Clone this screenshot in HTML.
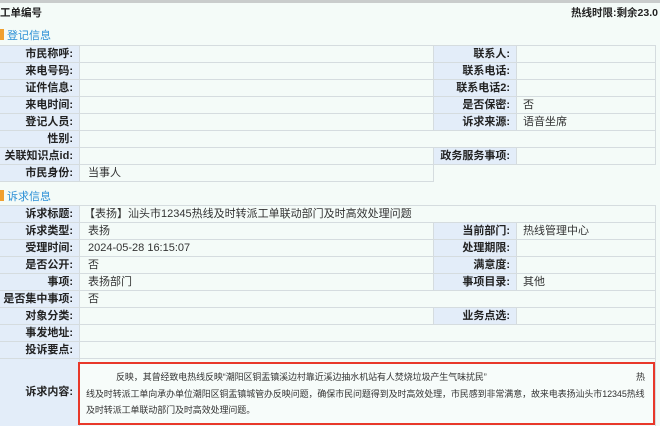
<!DOCTYPE html>
<html><head><meta charset="utf-8"><style>
*{margin:0;padding:0;box-sizing:border-box}
body{width:660px;height:426px;overflow:hidden;background:#f4fbf8;font-family:"Liberation Sans","Noto Sans CJK SC",sans-serif;font-size:11px;color:#333;position:relative}
.top{position:absolute;left:0;top:0;width:660px;height:3px;background:#c9cccc}
.abs{position:absolute;white-space:nowrap}
.b{font-weight:bold;color:#222}
.sec{position:absolute;left:0;color:#2a8fd6;font-size:11px}
.sec i{display:inline-block;width:4px;height:11px;background:#f0a030;margin-right:3px;vertical-align:-1px}
.row{position:absolute;left:0;width:656px;border-bottom:1px solid #d5dcdf}
.lab{position:absolute;left:0;width:80px;height:100%;background:#e3edf9;text-align:right;padding-right:6px;font-weight:bold;color:#222;border-right:1px solid #d5dcdf}
.lab2{position:absolute;left:433px;width:84px;height:100%;background:#e3edf9;text-align:right;padding-right:6px;font-weight:bold;color:#222;border-left:1px solid #d5dcdf;border-right:1px solid #d5dcdf}
.v{position:absolute;left:88px}
.v2{position:absolute;left:523px}
.rb{position:absolute;right:0;top:0;height:100%;border-right:1px solid #d5dcdf}
.ct{position:absolute;font-size:9px;letter-spacing:-0.1px;white-space:nowrap;color:#333}
</style></head><body>
<div class="top"></div>
<div class="abs b" style="left:0;top:5px;font-size:10.5px">工单编号</div>
<div class="abs b" style="right:2px;top:5px;font-size:10.5px">热线时限:剩余23.0</div>
<div class="sec" style="top:27px"><i></i>登记信息</div>

<div style="position:absolute;left:0;top:45px;width:656px;border-top:1px solid #d5dcdf"></div>
<div class="row" style="top:46px;height:17px;line-height:16px"><div class="lab">市民称呼:</div><div class="lab2">联系人:</div><div class="rb"></div></div>
<div class="row" style="top:63px;height:17px;line-height:16px"><div class="lab">来电号码:</div><div class="lab2">联系电话:</div><div class="rb"></div></div>
<div class="row" style="top:80px;height:17px;line-height:16px"><div class="lab">证件信息:</div><div class="lab2">联系电话2:</div><div class="rb"></div></div>
<div class="row" style="top:97px;height:17px;line-height:16px"><div class="lab">来电时间:</div><div class="lab2">是否保密:</div><div class="v2">否</div><div class="rb"></div></div>
<div class="row" style="top:114px;height:17px;line-height:16px"><div class="lab">登记人员:</div><div class="lab2">诉求来源:</div><div class="v2">语音坐席</div><div class="rb"></div></div>
<div class="row" style="top:131px;height:17px;line-height:16px"><div class="lab">性别:</div><div class="rb"></div></div>
<div class="row" style="top:148px;height:17px;line-height:16px"><div class="lab">关联知识点id:</div><div class="lab2">政务服务事项:</div><div class="rb"></div></div>
<div class="row" style="top:165px;height:17px;line-height:16px;width:434px"><div class="lab">市民身份:</div><div class="v">当事人</div><div class="rb"></div></div>

<div class="sec" style="top:188px"><i></i>诉求信息</div>
<div style="position:absolute;left:0;top:205px;width:656px;border-top:1px solid #d5dcdf"></div>
<div class="row" style="top:206px;height:17px;line-height:16px"><div class="lab">诉求标题:</div><div class="v" style="left:84px">【表扬】汕头市12345热线及时转派工单联动部门及时高效处理问题</div><div class="rb"></div></div>
<div class="row" style="top:223px;height:17px;line-height:16px"><div class="lab">诉求类型:</div><div class="v">表扬</div><div class="lab2">当前部门:</div><div class="v2">热线管理中心</div><div class="rb"></div></div>
<div class="row" style="top:240px;height:17px;line-height:16px"><div class="lab">受理时间:</div><div class="v">2024-05-28 16:15:07</div><div class="lab2">处理期限:</div><div class="rb"></div></div>
<div class="row" style="top:257px;height:17px;line-height:16px"><div class="lab">是否公开:</div><div class="v">否</div><div class="lab2">满意度:</div><div class="rb"></div></div>
<div class="row" style="top:274px;height:17px;line-height:16px"><div class="lab">事项:</div><div class="v">表扬部门</div><div class="lab2">事项目录:</div><div class="v2">其他</div><div class="rb"></div></div>
<div class="row" style="top:291px;height:17px;line-height:16px"><div class="lab">是否集中事项:</div><div class="v">否</div><div class="rb"></div></div>
<div class="row" style="top:308px;height:17px;line-height:16px"><div class="lab">对象分类:</div><div class="lab2">业务点选:</div><div class="rb"></div></div>
<div class="row" style="top:325px;height:17px;line-height:16px"><div class="lab">事发地址:</div><div class="rb"></div></div>
<div class="row" style="top:342px;height:17px;line-height:16px"><div class="lab">投诉要点:</div><div class="rb"></div></div>
<div class="row" style="top:359px;height:67px;border-bottom:none"><div class="lab" style="line-height:66px">诉求内容:</div><div class="rb"></div></div>
<div style="position:absolute;left:78px;top:362px;width:577px;height:63px;border:2px solid #e8382a;background:#f7fcfa"></div>
<div class="ct" style="left:116px;top:370px">反映，其曾经致电热线反映“潮阳区铜盂镇溪边村靠近溪边抽水机站有人焚烧垃圾产生气味扰民”</div>
<div class="ct" style="left:636px;top:370px">热</div>
<div class="ct" style="left:86px;top:387px">线及时转派工单向承办单位潮阳区铜盂镇城管办反映问题，确保市民问题得到及时高效处理，市民感到非常满意，故来电表扬汕头市12345热线</div>
<div class="ct" style="left:86px;top:403px">及时转派工单联动部门及时高效处理问题。</div>
</body></html>
